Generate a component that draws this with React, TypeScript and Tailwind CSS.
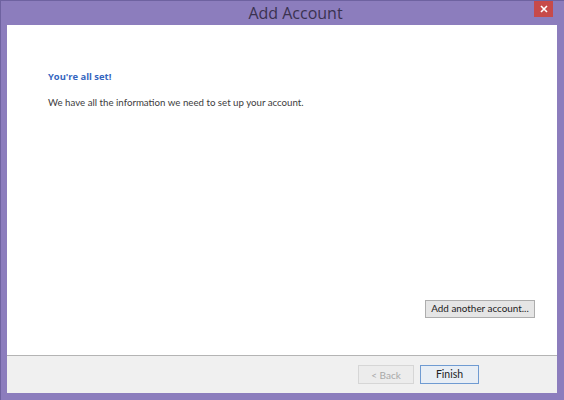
import React from 'react';

const App: React.FC = () => {
  return (
    <div
      className="w-[564px] h-[400px] bg-[#8c7dbd] border-l border-t border-[#6e62a0] flex flex-col"
      style={{ fontFamily: 'Lato, "Open Sans", sans-serif' }}
    >
      {/* Title bar */}
      <div className="h-[24px] flex items-start relative">
        <div className="flex-1 text-center pl-[26px] text-[16px] leading-[24px] text-[#3a3250] font-['Open_Sans',sans-serif]">
          Add Account
        </div>
        <button className="absolute right-[11px] top-0 w-[19px] h-[16px] bg-[#c74a4a] flex items-center justify-center">
          <svg width="8" height="8" viewBox="0 0 8 8">
            <path d="M1 1 L7 7 M7 1 L1 7" stroke="#fff" strokeWidth="1.6" />
          </svg>
        </button>
      </div>

      {/* Body */}
      <div className="flex-1 flex flex-col mx-[6px] mb-[7px] mr-[7px]">
        <div className="flex-1 bg-white flex flex-col px-[41px] pt-[44px]">
          <p className="text-[9.4px] font-bold text-[#3566c0] leading-[16px] font-['Open_Sans',sans-serif]">
            You're all set!
          </p>
          <p className="mt-[9px] text-[9.7px] text-[#3c3c3c] leading-[16px]">
            We have all the information we need to set up your account.
          </p>
          <div className="flex-1" />
          <div className="flex justify-end mr-[-19px] mb-[37px]">
            <button className="w-[110px] h-[18px] border border-[#adadad] bg-[#e5e5e5] text-[9.9px] text-[#222] leading-none">
              Add another account...
            </button>
          </div>
        </div>
        <div className="h-[38px] bg-[#f0f0f0] border-t border-[#b4b4b4] flex items-center justify-end gap-[6px] pr-[78px]">
          <button className="w-[56px] h-[19px] border border-[#d6d6d6] bg-[#ececec] text-[10px] text-[#a8a8a8] leading-none">
            &lt; Back
          </button>
          <button className="w-[59px] h-[19px] border border-[#6f9bd2] bg-[#e8eef5] text-[10.5px] text-[#222] leading-none">
            Finish
          </button>
        </div>
      </div>
    </div>
  );
};

export default App;
